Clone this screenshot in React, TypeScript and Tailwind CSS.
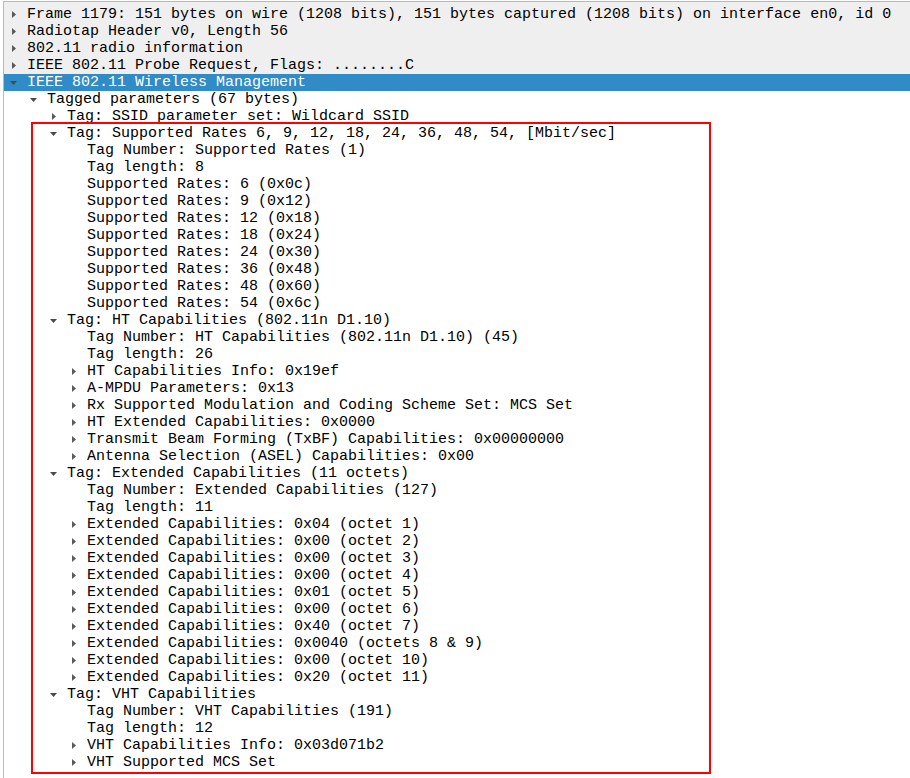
type Row = {
  level: 0 | 1 | 2 | 3;
  text: string;
  exp?: "open" | "closed";
  tone?: "gray" | "selected";
};

const rows: Row[] = [
  { level: 0, exp: "closed", tone: "gray", text: "Frame 1179: 151 bytes on wire (1208 bits), 151 bytes captured (1208 bits) on interface en0, id 0" },
  { level: 0, exp: "closed", tone: "gray", text: "Radiotap Header v0, Length 56" },
  { level: 0, exp: "closed", tone: "gray", text: "802.11 radio information" },
  { level: 0, exp: "closed", tone: "gray", text: "IEEE 802.11 Probe Request, Flags: ........C" },
  { level: 0, exp: "open", tone: "selected", text: "IEEE 802.11 Wireless Management" },
  { level: 1, exp: "open", text: "Tagged parameters (67 bytes)" },
  { level: 2, exp: "closed", text: "Tag: SSID parameter set: Wildcard SSID" },
  { level: 2, exp: "open", text: "Tag: Supported Rates 6, 9, 12, 18, 24, 36, 48, 54, [Mbit/sec]" },
  { level: 3, text: "Tag Number: Supported Rates (1)" },
  { level: 3, text: "Tag length: 8" },
  { level: 3, text: "Supported Rates: 6 (0x0c)" },
  { level: 3, text: "Supported Rates: 9 (0x12)" },
  { level: 3, text: "Supported Rates: 12 (0x18)" },
  { level: 3, text: "Supported Rates: 18 (0x24)" },
  { level: 3, text: "Supported Rates: 24 (0x30)" },
  { level: 3, text: "Supported Rates: 36 (0x48)" },
  { level: 3, text: "Supported Rates: 48 (0x60)" },
  { level: 3, text: "Supported Rates: 54 (0x6c)" },
  { level: 2, exp: "open", text: "Tag: HT Capabilities (802.11n D1.10)" },
  { level: 3, text: "Tag Number: HT Capabilities (802.11n D1.10) (45)" },
  { level: 3, text: "Tag length: 26" },
  { level: 3, exp: "closed", text: "HT Capabilities Info: 0x19ef" },
  { level: 3, exp: "closed", text: "A-MPDU Parameters: 0x13" },
  { level: 3, exp: "closed", text: "Rx Supported Modulation and Coding Scheme Set: MCS Set" },
  { level: 3, exp: "closed", text: "HT Extended Capabilities: 0x0000" },
  { level: 3, exp: "closed", text: "Transmit Beam Forming (TxBF) Capabilities: 0x00000000" },
  { level: 3, exp: "closed", text: "Antenna Selection (ASEL) Capabilities: 0x00" },
  { level: 2, exp: "open", text: "Tag: Extended Capabilities (11 octets)" },
  { level: 3, text: "Tag Number: Extended Capabilities (127)" },
  { level: 3, text: "Tag length: 11" },
  { level: 3, exp: "closed", text: "Extended Capabilities: 0x04 (octet 1)" },
  { level: 3, exp: "closed", text: "Extended Capabilities: 0x00 (octet 2)" },
  { level: 3, exp: "closed", text: "Extended Capabilities: 0x00 (octet 3)" },
  { level: 3, exp: "closed", text: "Extended Capabilities: 0x00 (octet 4)" },
  { level: 3, exp: "closed", text: "Extended Capabilities: 0x01 (octet 5)" },
  { level: 3, exp: "closed", text: "Extended Capabilities: 0x00 (octet 6)" },
  { level: 3, exp: "closed", text: "Extended Capabilities: 0x40 (octet 7)" },
  { level: 3, exp: "closed", text: "Extended Capabilities: 0x0040 (octets 8 & 9)" },
  { level: 3, exp: "closed", text: "Extended Capabilities: 0x00 (octet 10)" },
  { level: 3, exp: "closed", text: "Extended Capabilities: 0x20 (octet 11)" },
  { level: 2, exp: "open", text: "Tag: VHT Capabilities" },
  { level: 3, text: "Tag Number: VHT Capabilities (191)" },
  { level: 3, text: "Tag length: 12" },
  { level: 3, exp: "closed", text: "VHT Capabilities Info: 0x03d071b2" },
  { level: 3, exp: "closed", text: "VHT Supported MCS Set" },
];

const indent = ["pl-0", "pl-5", "pl-10", "pl-15"];

function Arrow({ exp }: { exp?: "open" | "closed" }) {
  if (!exp) return null;
  // small tree expander triangles, like the Qt tree view
  return exp === "open" ? (
    <svg width="7" height="4" viewBox="0 0 7 4" className="mt-[1px]">
      <path d="M0 0 H7 L3.5 4 Z" fill="#4a4a4a" />
    </svg>
  ) : (
    <svg width="4" height="7" viewBox="0 0 4 7" className="ml-[1px]">
      <path d="M0 0 L4 3.5 L0 7 Z" fill="#5a5a5a" />
    </svg>
  );
}

function TreeRow({ row }: { row: Row }) {
  const bg =
    row.tone === "selected"
      ? "bg-[#308bc7] text-white"
      : row.tone === "gray"
        ? "bg-[#efefef] text-black"
        : "text-black";

  return (
    <div className={`flex h-[17px] items-center ${bg}`}>
      <div className={`flex items-center ${indent[row.level]}`}>
        <span className="flex w-[19px] mr-[4px] items-center justify-center">
          <Arrow exp={row.exp} />
        </span>
        <span className="whitespace-pre leading-[17px]">{row.text}</span>
      </div>
    </div>
  );
}

export default function App() {
  return (
    <div className="relative h-[778px] w-[910px] overflow-hidden bg-white font-['Liberation_Mono',monospace] text-[15px]">
      <div className="ml-[3px] mt-[1px] h-[777px] border-l border-t border-[#b9b9b9]">
        <div className="h-[4px] bg-[#efefef]" />
        {rows.map((row, i) => (
          <TreeRow key={i} row={row} />
        ))}
      </div>

      {/* highlight box drawn over the tree */}
      <div className="pointer-events-none absolute left-[31px] top-[122px] h-[652px] w-[680px] border-2 border-[#ff0000]" />
    </div>
  );
}
